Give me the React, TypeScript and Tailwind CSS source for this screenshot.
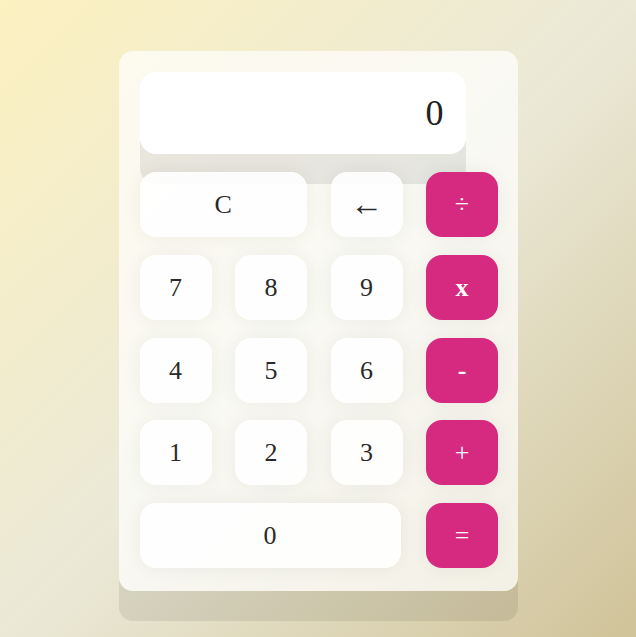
import React, { useState } from 'react';

type Key = {
    label: string;
    kind: 'num' | 'op' | 'fn';
    span?: string;
    extra?: string;
};

const keys: Key[] = [
    { label: 'C', kind: 'fn', span: 'col-span-2' },
    { label: '←', kind: 'fn', extra: 'text-[33px]' },
    { label: '÷', kind: 'op' },
    { label: '7', kind: 'num' },
    { label: '8', kind: 'num' },
    { label: '9', kind: 'num' },
    { label: 'x', kind: 'op', extra: 'font-bold' },
    { label: '4', kind: 'num' },
    { label: '5', kind: 'num' },
    { label: '6', kind: 'num' },
    { label: '-', kind: 'op', extra: 'font-bold' },
    { label: '1', kind: 'num' },
    { label: '2', kind: 'num' },
    { label: '3', kind: 'num' },
    { label: '+', kind: 'op' },
    { label: '0', kind: 'num', span: 'col-span-3 w-[261px]' },
    { label: '=', kind: 'op' },
];

export default function App() {
    const [value, setValue] = useState('0');

    const press = (k: Key) => {
        if (k.label === 'C') return setValue('0');
        if (k.label === '←') return setValue(v => (v.length > 1 ? v.slice(0, -1) : '0'));
        if (k.label === '=') {
            try {
                const expr = value.replace(/x/g, '*').replace(/÷/g, '/');
                // eslint-disable-next-line no-new-func
                const out = Function(`return (${expr})`)();
                setValue(String(out));
            } catch {
                setValue('0');
            }
            return;
        }
        setValue(v => (v === '0' && k.kind === 'num' ? k.label : v + k.label));
    };

    return (
        <div
            className="min-h-screen w-full flex justify-center pt-[51px] bg-[linear-gradient(135deg,#fcf1c0_0%,#ebe9d7_50%,#d0c399_100%)]"
            style={{ fontFamily: '"Liberation Serif", "Times New Roman", serif' }}
        >
            <div className="w-[399px] h-[540px] rounded-[14px] bg-white/70 pt-[21px] pl-[21px] shadow-[0_30px_0_rgba(0,0,0,0.08)]">
                <div className="w-[326px] h-[82px] rounded-[16px] bg-white flex items-center justify-end pr-[22px] text-[36px] text-[#222] shadow-[0_30px_0_rgba(0,0,0,0.08)]">
                    {value}
                </div>
                <div className="mt-[18px] grid grid-cols-[repeat(4,72px)] auto-rows-[65px] gap-x-[23.5px] gap-y-[17.75px]">
                    {keys.map(k => (
                        <button
                            key={k.label}
                            onClick={() => press(k)}
                            className={`${k.span ?? ''} rounded-[16px] flex items-center justify-center text-[26px] shadow-[0_0_20px_rgba(0,0,0,0.06)] ${
                                k.kind === 'op'
                                    ? 'bg-[#d62a81] text-white'
                                    : 'bg-white/90 text-[#2a2a2a]'
                            } ${k.extra ?? 'font-normal'}`}
                        >
                            {k.label}
                        </button>
                    ))}
                </div>
            </div>
        </div>
    );
}
